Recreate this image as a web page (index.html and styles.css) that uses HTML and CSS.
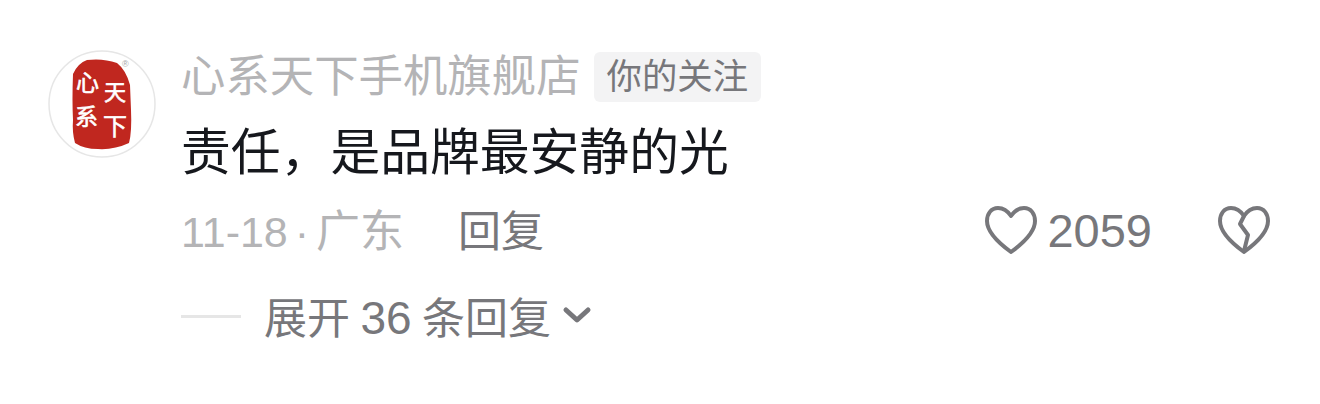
FILE: index.html
```html
<!DOCTYPE html>
<html lang="zh-CN">
<head>
    <meta charset="UTF-8">
    <title>评论</title>
    <link rel="stylesheet" href="styles.css">
</head>
<body>

<div class="comment">
    <svg class="avatar" width="108" height="108" viewBox="0 0 108 108">
        <circle cx="54" cy="54" r="53" fill="#fff" stroke="#e6e6e6" stroke-width="1.5"/>
        <path d="M25 24 Q30 13 39 10 Q55 8 69 13 Q78 20 82 35 L83 60 Q84 82 81 93 Q66 100 50 99 Q36 99 27 93 Q24 82 25 70 Q24 50 25 24 Z" fill="#c0271f"/>
        <text class="seal" x="28" y="41" font-size="23">心</text>
        <text class="seal" x="27" y="75" font-size="23">系</text>
        <text class="seal" x="56" y="50" font-size="22">天</text>
        <text class="seal" x="55" y="85" font-size="24">下</text>
        <text class="mark" x="74" y="17" font-size="9">®</text>
    </svg>

    <div class="body">
        <div class="head">
            <span class="name">心系天下手机旗舰店</span>
            <span class="tag">你的关注</span>
        </div>
        <p class="text">责任，是品牌最安静的光</p>
        <div class="meta">
            <span class="time">11-18 · <span class="place">广东</span></span>
            <span class="reply">回复</span>
            <span class="likes">
                <svg width="52" height="48" viewBox="0 0 52 48" fill="none" stroke="#77777b" stroke-width="4" stroke-linejoin="round">
                    <path d="M26 10 C22 4 17 2 13 2 C6 2 2 8 2 15 C2 27 15 38 26 46 C37 38 50 27 50 15 C50 8 46 2 39 2 C35 2 30 4 26 10 Z"/>
                </svg>
                <span class="count">2059</span>
            </span>
            <svg class="dislike" width="52" height="48" viewBox="0 0 52 48" fill="none" stroke="#77777b" stroke-width="4" stroke-linejoin="round" stroke-linecap="round">
                <path d="M26 10 C22 4 17 2 13 2 C6 2 2 8 2 15 C2 27 15 38 26 46 C37 38 50 27 50 15 C50 8 46 2 39 2 C35 2 30 4 26 10 Z"/>
                <path d="M26 10 L22 18 L30 29 L26 45"/>
            </svg>
        </div>
        <div class="more">
            <span class="line"></span>
            <span class="more-text">展开 <span class="num">36</span> 条回复</span>
            <svg width="30" height="18" viewBox="0 0 30 18" fill="none" stroke="#77777b" stroke-width="5" stroke-linecap="round" stroke-linejoin="round">
                <path d="M4 4 L15 14 L26 4"/>
            </svg>
        </div>
    </div>
</div>

</body>
</html>
```

FILE: styles.css
```css
body {
    margin: 0;
    background: #fff;
    font-family: "Liberation Sans", "Noto Sans CJK SC", sans-serif;
}
.comment {
    display: flex;
    align-items: flex-start;
    padding: 50px 50px 0 48px;
    gap: 25px;
}
.avatar {
    flex: none;
}
.seal {
    fill: #fff;
    stroke: #fff;
    stroke-width: 0.6;
    font-family: "Noto Sans CJK SC", sans-serif;
}
.mark {
    fill: #a8a8a8;
}
.body {
    flex: 1;
}
.head {
    display: flex;
    align-items: center;
    height: 52px;
    margin-top: 1px;
    gap: 13px;
}
.name {
    font-size: 44.4px;
    color: #b4b4b6;
    line-height: 52px;
}
.tag {
    background: #f3f3f4;
    color: #77777b;
    font-size: 35.4px;
    line-height: 50px;
    padding: 0 13px;
    border-radius: 6px;
}
.text {
    margin: 21px 0 0;
    font-size: 49.8px;
    line-height: 58px;
    color: #16181d;
}
.meta {
    display: flex;
    align-items: center;
    height: 56px;
    margin-top: 18px;
    font-size: 43px;
}
.time {
    color: #b4b4b6;
    width: 277px;
    word-spacing: -5px;
}
.place {
    font-size: 44px;
}
.reply {
    color: #77777b;
}
.likes {
    display: flex;
    align-items: center;
    gap: 10px;
    margin-left: auto;
    margin-top: 4px;
    color: #77777b;
}
.count {
    font-size: 47px;
}
.dislike {
    margin-left: 66px;
    margin-top: 4px;
}
.more {
    display: flex;
    align-items: center;
    margin-top: 31px;
    height: 56px;
    color: #77777b;
    font-size: 43px;
}
.num {
    font-size: 46px;
}
.line {
    width: 60px;
    height: 3px;
    background: #e6e6e6;
    margin-right: 23px;
    margin-top: 2px;
}
.more-text {
    margin-right: 11px;
    word-spacing: -1.5px;
}
```
